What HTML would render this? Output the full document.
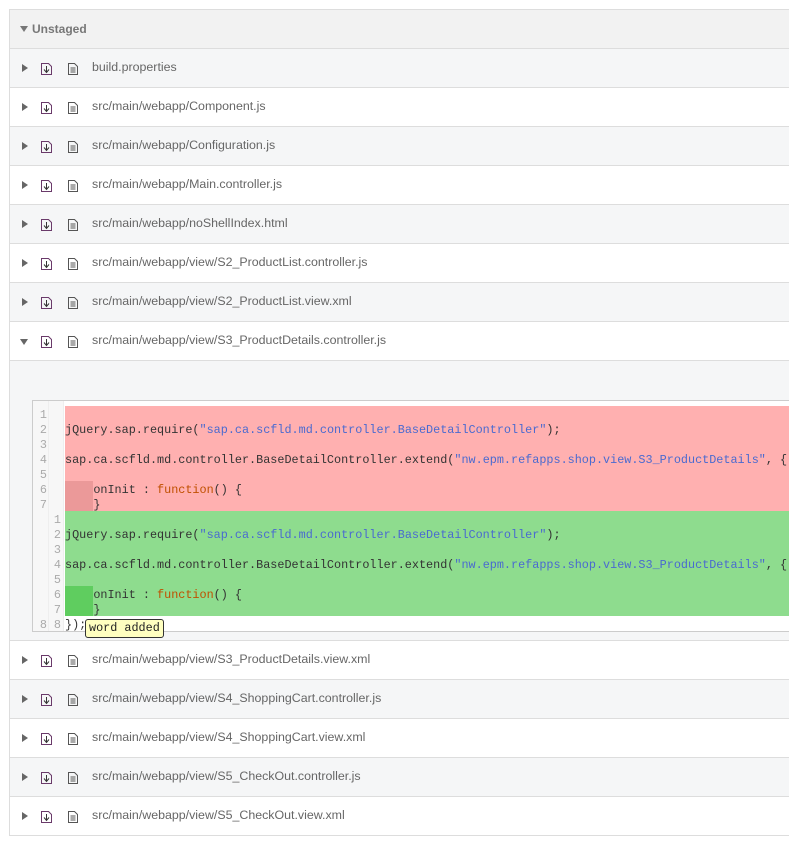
<!DOCTYPE html><html><head><style>
body{margin:0;background:#fff;font-family:"Liberation Sans",Arial,sans-serif;}
.c{position:absolute;left:9px;top:9px;width:790px;border-left:1px solid #ddd;border-top:1px solid #ddd;}
.h{height:38px;background:#f2f2f2;border-bottom:1px solid #ddd;font-size:12px;font-weight:bold;color:#777;line-height:38px;padding-left:10px;}
.r{height:38px;border-bottom:1px solid #ddd;position:relative;font-size:12.4px;color:#666;}
.r.g{background:#f5f6f7}
.r .t{position:absolute;left:82px;top:11px}
.r .a{position:absolute;left:12px;top:15px;width:0;height:0;border-left:6px solid #666;border-top:4px solid transparent;border-bottom:4px solid transparent}
.r .a.d{left:10px;top:17px;border-left:4px solid transparent;border-right:4px solid transparent;border-top:6px solid #666;border-bottom:0}
.r svg{position:absolute;top:13px}
.ex{height:279px;background:#f5f6f7;border-bottom:1px solid #ddd;position:relative}
.code{position:absolute;left:22px;top:39px;width:770px;height:230px;background:#fff;border:1px solid #ccc;font-family:"Liberation Mono",monospace;font-size:11.8px;}
.ln{position:absolute;left:32px;right:0;height:15px;line-height:15px;white-space:pre;color:#333;overflow:hidden;padding-top:2px}
.n{position:absolute;color:#aaa;line-height:15px;width:12px;text-align:right;padding-top:2px}
.s{color:#4a6ad0}.k{color:#c05000}
</style></head><body>
<div class="c">
<div class="h"><span style="display:inline-block;border-left:4px solid transparent;border-right:4px solid transparent;border-top:6px solid #777;margin-right:4px;vertical-align:1px"></span>Unstaged</div>

<div class="r g"><i class="a"></i><svg style="left:30px" width="13" height="14"><path d="M1.5 1.5h7l3 3v8h-10z" fill="none" stroke="#6a3a6a"/><path d="M6.5 4v6M4 7.5l2.5 3 2.5-3" fill="none" stroke="#333"/></svg><svg style="left:57px" width="12" height="14"><path d="M1.5 1.5h6l3 3v8h-9z" fill="none" stroke="#555"/><path d="M3.5 6h5M3.5 8h5M3.5 10h5" stroke="#555"/></svg><span class="t">build.properties</span></div>
<div class="r"><i class="a"></i><svg style="left:30px" width="13" height="14"><path d="M1.5 1.5h7l3 3v8h-10z" fill="none" stroke="#6a3a6a"/><path d="M6.5 4v6M4 7.5l2.5 3 2.5-3" fill="none" stroke="#333"/></svg><svg style="left:57px" width="12" height="14"><path d="M1.5 1.5h6l3 3v8h-9z" fill="none" stroke="#555"/><path d="M3.5 6h5M3.5 8h5M3.5 10h5" stroke="#555"/></svg><span class="t">src/main/webapp/Component.js</span></div>
<div class="r g"><i class="a"></i><svg style="left:30px" width="13" height="14"><path d="M1.5 1.5h7l3 3v8h-10z" fill="none" stroke="#6a3a6a"/><path d="M6.5 4v6M4 7.5l2.5 3 2.5-3" fill="none" stroke="#333"/></svg><svg style="left:57px" width="12" height="14"><path d="M1.5 1.5h6l3 3v8h-9z" fill="none" stroke="#555"/><path d="M3.5 6h5M3.5 8h5M3.5 10h5" stroke="#555"/></svg><span class="t">src/main/webapp/Configuration.js</span></div>
<div class="r"><i class="a"></i><svg style="left:30px" width="13" height="14"><path d="M1.5 1.5h7l3 3v8h-10z" fill="none" stroke="#6a3a6a"/><path d="M6.5 4v6M4 7.5l2.5 3 2.5-3" fill="none" stroke="#333"/></svg><svg style="left:57px" width="12" height="14"><path d="M1.5 1.5h6l3 3v8h-9z" fill="none" stroke="#555"/><path d="M3.5 6h5M3.5 8h5M3.5 10h5" stroke="#555"/></svg><span class="t">src/main/webapp/Main.controller.js</span></div>
<div class="r g"><i class="a"></i><svg style="left:30px" width="13" height="14"><path d="M1.5 1.5h7l3 3v8h-10z" fill="none" stroke="#6a3a6a"/><path d="M6.5 4v6M4 7.5l2.5 3 2.5-3" fill="none" stroke="#333"/></svg><svg style="left:57px" width="12" height="14"><path d="M1.5 1.5h6l3 3v8h-9z" fill="none" stroke="#555"/><path d="M3.5 6h5M3.5 8h5M3.5 10h5" stroke="#555"/></svg><span class="t">src/main/webapp/noShellIndex.html</span></div>
<div class="r"><i class="a"></i><svg style="left:30px" width="13" height="14"><path d="M1.5 1.5h7l3 3v8h-10z" fill="none" stroke="#6a3a6a"/><path d="M6.5 4v6M4 7.5l2.5 3 2.5-3" fill="none" stroke="#333"/></svg><svg style="left:57px" width="12" height="14"><path d="M1.5 1.5h6l3 3v8h-9z" fill="none" stroke="#555"/><path d="M3.5 6h5M3.5 8h5M3.5 10h5" stroke="#555"/></svg><span class="t">src/main/webapp/view/S2_ProductList.controller.js</span></div>
<div class="r g"><i class="a"></i><svg style="left:30px" width="13" height="14"><path d="M1.5 1.5h7l3 3v8h-10z" fill="none" stroke="#6a3a6a"/><path d="M6.5 4v6M4 7.5l2.5 3 2.5-3" fill="none" stroke="#333"/></svg><svg style="left:57px" width="12" height="14"><path d="M1.5 1.5h6l3 3v8h-9z" fill="none" stroke="#555"/><path d="M3.5 6h5M3.5 8h5M3.5 10h5" stroke="#555"/></svg><span class="t">src/main/webapp/view/S2_ProductList.view.xml</span></div>
<div class="r"><i class="a d"></i><svg style="left:30px" width="13" height="14"><path d="M1.5 1.5h7l3 3v8h-10z" fill="none" stroke="#6a3a6a"/><path d="M6.5 4v6M4 7.5l2.5 3 2.5-3" fill="none" stroke="#333"/></svg><svg style="left:57px" width="12" height="14"><path d="M1.5 1.5h6l3 3v8h-9z" fill="none" stroke="#555"/><path d="M3.5 6h5M3.5 8h5M3.5 10h5" stroke="#555"/></svg><span class="t">src/main/webapp/view/S3_ProductDetails.controller.js</span></div>

<div class="ex"><div class="code">
<div style="position:absolute;left:0;top:0;width:15px;height:230px;background:#f7f7f7;border-right:1px solid #eee"></div>
<div style="position:absolute;left:16px;top:0;width:14px;height:230px;background:#f7f7f7;border-right:1px solid #eee"></div>
<div style="position:absolute;left:32px;right:0;top:5px;height:105px;background:#ffb0b0"></div>
<div style="position:absolute;left:32px;top:80px;width:28px;height:30px;background:#eb9999"></div>
<div style="position:absolute;left:32px;right:0;top:110px;height:105px;background:#8edc8e"></div>
<div style="position:absolute;left:32px;top:185px;width:28px;height:30px;background:#5fcd5f"></div>
<div class="n" style="left:2px;top:5px">1<br>2<br>3<br>4<br>5<br>6<br>7</div>
<div class="n" style="left:16px;top:110px">1<br>2<br>3<br>4<br>5<br>6<br>7</div>
<div class="n" style="left:2px;top:215px">8</div><div class="n" style="left:16px;top:215px">8</div>
<div class="ln" style="top:20px">jQuery.sap.require(<span class="s">"sap.ca.scfld.md.controller.BaseDetailController"</span>);</div>
<div class="ln" style="top:50px">sap.ca.scfld.md.controller.BaseDetailController.extend(<span class="s">"nw.epm.refapps.shop.view.S3_ProductDetails"</span>, {</div>
<div class="ln" style="top:80px">    onInit : <span class="k">function</span>() {</div>
<div class="ln" style="top:95px">    }</div>
<div class="ln" style="top:125px">jQuery.sap.require(<span class="s">"sap.ca.scfld.md.controller.BaseDetailController"</span>);</div>
<div class="ln" style="top:155px">sap.ca.scfld.md.controller.BaseDetailController.extend(<span class="s">"nw.epm.refapps.shop.view.S3_ProductDetails"</span>, {</div>
<div class="ln" style="top:185px">    onInit : <span class="k">function</span>() {</div>
<div class="ln" style="top:200px">    }</div>
<div class="ln" style="top:215px">});</div>
<div style="position:absolute;left:52px;top:218px;height:17px;line-height:17px;padding:0 3px;background:#ffffc0;border:1px solid #333;border-radius:3px;color:#222;font-size:11.8px;white-space:pre;z-index:2">word added</div>
</div></div>

<div class="r"><i class="a"></i><svg style="left:30px" width="13" height="14"><path d="M1.5 1.5h7l3 3v8h-10z" fill="none" stroke="#6a3a6a"/><path d="M6.5 4v6M4 7.5l2.5 3 2.5-3" fill="none" stroke="#333"/></svg><svg style="left:57px" width="12" height="14"><path d="M1.5 1.5h6l3 3v8h-9z" fill="none" stroke="#555"/><path d="M3.5 6h5M3.5 8h5M3.5 10h5" stroke="#555"/></svg><span class="t">src/main/webapp/view/S3_ProductDetails.view.xml</span></div>
<div class="r g"><i class="a"></i><svg style="left:30px" width="13" height="14"><path d="M1.5 1.5h7l3 3v8h-10z" fill="none" stroke="#6a3a6a"/><path d="M6.5 4v6M4 7.5l2.5 3 2.5-3" fill="none" stroke="#333"/></svg><svg style="left:57px" width="12" height="14"><path d="M1.5 1.5h6l3 3v8h-9z" fill="none" stroke="#555"/><path d="M3.5 6h5M3.5 8h5M3.5 10h5" stroke="#555"/></svg><span class="t">src/main/webapp/view/S4_ShoppingCart.controller.js</span></div>
<div class="r"><i class="a"></i><svg style="left:30px" width="13" height="14"><path d="M1.5 1.5h7l3 3v8h-10z" fill="none" stroke="#6a3a6a"/><path d="M6.5 4v6M4 7.5l2.5 3 2.5-3" fill="none" stroke="#333"/></svg><svg style="left:57px" width="12" height="14"><path d="M1.5 1.5h6l3 3v8h-9z" fill="none" stroke="#555"/><path d="M3.5 6h5M3.5 8h5M3.5 10h5" stroke="#555"/></svg><span class="t">src/main/webapp/view/S4_ShoppingCart.view.xml</span></div>
<div class="r g"><i class="a"></i><svg style="left:30px" width="13" height="14"><path d="M1.5 1.5h7l3 3v8h-10z" fill="none" stroke="#6a3a6a"/><path d="M6.5 4v6M4 7.5l2.5 3 2.5-3" fill="none" stroke="#333"/></svg><svg style="left:57px" width="12" height="14"><path d="M1.5 1.5h6l3 3v8h-9z" fill="none" stroke="#555"/><path d="M3.5 6h5M3.5 8h5M3.5 10h5" stroke="#555"/></svg><span class="t">src/main/webapp/view/S5_CheckOut.controller.js</span></div>
<div class="r"><i class="a"></i><svg style="left:30px" width="13" height="14"><path d="M1.5 1.5h7l3 3v8h-10z" fill="none" stroke="#6a3a6a"/><path d="M6.5 4v6M4 7.5l2.5 3 2.5-3" fill="none" stroke="#333"/></svg><svg style="left:57px" width="12" height="14"><path d="M1.5 1.5h6l3 3v8h-9z" fill="none" stroke="#555"/><path d="M3.5 6h5M3.5 8h5M3.5 10h5" stroke="#555"/></svg><span class="t">src/main/webapp/view/S5_CheckOut.view.xml</span></div>
</div>
</body></html>
